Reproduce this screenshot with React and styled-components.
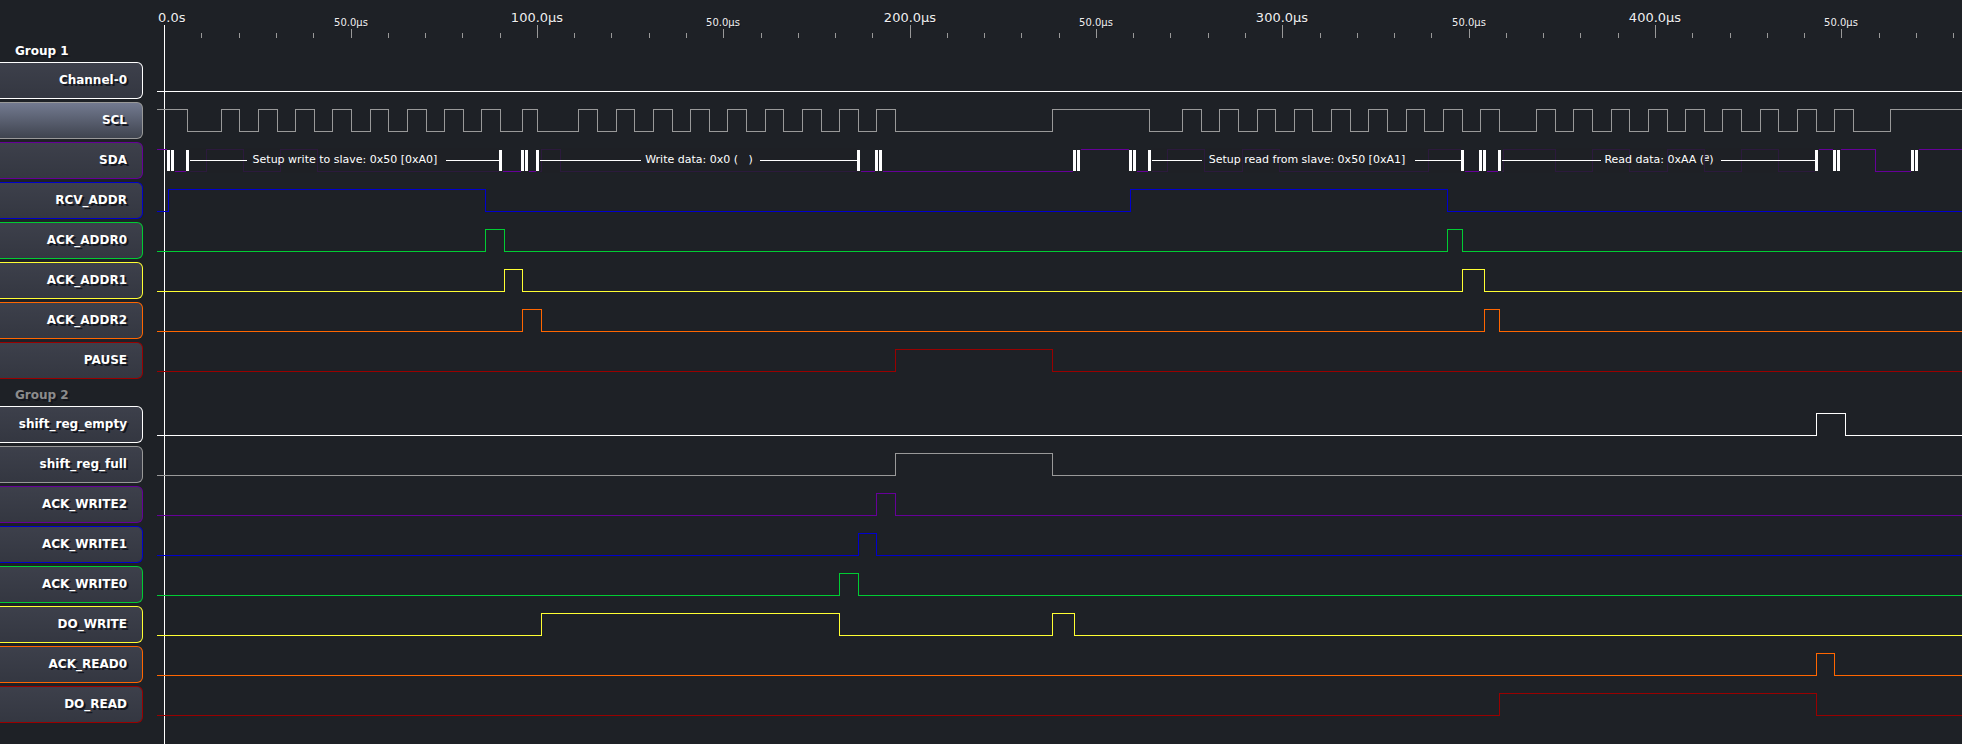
import React from 'react';
import styled, { createGlobalStyle } from 'styled-components';

const Global = createGlobalStyle`
  *, *::before, *::after { box-sizing: border-box; }
  body {
    margin: 0;
    background: #1e2126;
    color: #ffffff;
    font-family: 'DejaVu Sans', sans-serif;
  }
`;

/* Horizontal scale of the capture: the trigger sits at ORIGIN, traces start at PLOT_LEFT. */
const PLOT_LEFT = 157;
const ORIGIN = 164.7;
const PX_PER_US = 3.727;
const TRACE_END = 4000;
const HIGH = 7;
const LOW = 29;

const colors = {
  white: '#ffffff',
  gray: '#999999',
  purple: '#660099',
  blue: '#0000cc',
  green: '#00cc33',
  yellow: '#ffff33',
  orange: '#ff6600',
  red: '#990000',
};

const sdaEvents = {
  markers: [
    167, 171, 186, 499, 521, 525, 536, 857, 875, 879, 1073, 1077, 1129, 1133,
    1148, 1461, 1479, 1483, 1498, 1815, 1833, 1837, 1911, 1915,
  ],
  spans: [
    { from: 189, to: 499, gap: [247, 446], label: 'Setup write to slave: 0x50 [0xA0]' },
    { from: 539, to: 857, gap: [641, 760], label: 'Write data: 0x0 (\u00a0\u00a0\u00a0)' },
    { from: 1151, to: 1461, gap: [1202, 1415], label: 'Setup read from slave: 0x50 [0xA1]' },
    { from: 1501, to: 1815, gap: [1601, 1721], label: 'Read data: 0xAA (ª)' },
  ],
};

const groups = [
  {
    name: 'Group 1',
    channels: [
      { name: 'Channel-0', color: colors.white, edges: [] },
      {
        name: 'SCL',
        color: colors.gray,
        selected: true,
        startHigh: true,
        edges: [
          187, 221, 239, 258, 277, 295, 314, 332, 351, 370, 388, 407, 426, 444,
          463, 481, 500, 522, 537, 578, 597, 616, 634, 653, 672, 690, 709, 727,
          746, 765, 783, 802, 821, 839, 858, 876, 895, 1052, 1149, 1182, 1201,
          1219, 1238, 1257, 1275, 1294, 1312, 1331, 1350, 1368, 1387, 1406,
          1424, 1443, 1462, 1480, 1499, 1536, 1555, 1573, 1592, 1611, 1629,
          1648, 1667, 1685, 1704, 1722, 1741, 1760, 1778, 1797, 1816, 1834,
          1853, 1890,
        ],
      },
      {
        name: 'SDA',
        color: colors.purple,
        startHigh: true,
        edges: [
          168, 206, 243, 280, 317, 541, 560, 1075, 1131, 1167, 1204, 1242,
          1279, 1428, 1462, 1503, 1555, 1592, 1629, 1667, 1704, 1741, 1778,
          1816, 1875, 1912,
        ],
        events: sdaEvents,
      },
      { name: 'RCV_ADDR', color: colors.blue, edges: [168, 485, 1130, 1447] },
      { name: 'ACK_ADDR0', color: colors.green, edges: [485, 504, 1447, 1462] },
      { name: 'ACK_ADDR1', color: colors.yellow, edges: [504, 522, 1462, 1484] },
      { name: 'ACK_ADDR2', color: colors.orange, edges: [522, 541, 1484, 1499] },
      { name: 'PAUSE', color: colors.red, edges: [895, 1052] },
    ],
  },
  {
    name: 'Group 2',
    muted: true,
    channels: [
      { name: 'shift_reg_empty', color: colors.white, edges: [1816, 1845] },
      { name: 'shift_reg_full', color: colors.gray, edges: [895, 1052] },
      { name: 'ACK_WRITE2', color: colors.purple, edges: [876, 895] },
      { name: 'ACK_WRITE1', color: colors.blue, edges: [858, 876] },
      { name: 'ACK_WRITE0', color: colors.green, edges: [839, 858] },
      { name: 'DO_WRITE', color: colors.yellow, edges: [541, 839, 1052, 1074] },
      { name: 'ACK_READ0', color: colors.orange, edges: [1816, 1834] },
      { name: 'DO_READ', color: colors.red, edges: [1499, 1816] },
    ],
  },
];

const Page = styled.main`
  position: relative;
  min-height: 100vh;
  overflow: hidden;
`;

const Header = styled.header`
  position: relative;
  z-index: 1;
  padding-left: ${PLOT_LEFT}px;
`;

const Cursor = styled.div`
  position: absolute;
  top: 25px;
  bottom: 0;
  left: 164px;
  width: 1px;
  background: #ffffff;
`;

const Group = styled.section`
  position: relative;
  display: flex;
  flex-direction: column;
  gap: 3px;
  padding-bottom: 3px;
`;

const GroupName = styled.h2`
  margin: 0;
  padding-left: 15px;
  height: 21px;
  font-size: 12px;
  line-height: 26px;
  font-weight: bold;
  color: ${(p) => (p.$muted ? '#8c8c8c' : '#ffffff')};
  text-shadow: 2px 2px 0 #14161e;
`;

const Channel = styled.div`
  display: flex;
  gap: 14px;
`;

const ChannelButton = styled.button`
  flex: none;
  width: 143px;
  height: 37px;
  padding: 0 15px 2px 0;
  border: 1px solid ${(p) => p.$color};
  border-left: 0;
  border-radius: 0 6px 6px 0;
  background: ${(p) =>
    p.$selected
      ? 'linear-gradient(#737a90, #3f444f)'
      : 'linear-gradient(#3d404b, #343741)'};
  color: #ffffff;
  font: bold 12px 'DejaVu Sans', sans-serif;
  text-align: right;
  text-shadow: 2px 2px 0 #14161e;
`;

const Plot = styled.svg`
  display: block;
  flex: 1;
  min-width: 0;
  width: 100%;
  height: ${(p) => p.$height}px;
  overflow: hidden;
  shape-rendering: crispEdges;
`;

const Scale = styled.text`
  font-size: ${(p) => (p.$major ? 13 : 10)}px;
  fill: #eeeeee;
  text-anchor: ${(p) => (p.$start ? 'start' : 'middle')};
  text-shadow: 1px 1px 0 #14161e;
`;

const EventText = styled.text`
  font-size: 11px;
  fill: #ffffff;
  text-anchor: middle;
`;

function Ruler() {
  const ticks = Array.from({ length: 49 }, (_, n) => n);
  return (
    <Plot $height={38} role="img" aria-label="Time scale">
      {ticks.map((n) => {
        const x = Math.floor(ORIGIN + n * 10 * PX_PER_US) - PLOT_LEFT;
        const major = n % 10 === 0;
        const middle = n % 5 === 0;
        const top = major ? 25 : middle ? 29 : 33;
        return (
          <g key={n}>
            {n > 0 && <rect x={x} y={top} width="1" height={38 - top} fill="#999999" />}
            {major && n === 0 && <Scale $major $start x="1" y="22">0.0s</Scale>}
            {major && n > 0 && <Scale $major x={x} y="22">{`${n * 10}.0µs`}</Scale>}
            {!major && middle && <Scale x={x} y="26">50.0µs</Scale>}
          </g>
        );
      })}
    </Plot>
  );
}

function tracePath(edges, startHigh) {
  let high = Boolean(startHigh);
  let d = `M0 ${(high ? HIGH : LOW) + 0.5}`;
  edges.forEach((edge) => {
    high = !high;
    d += `H${edge - PLOT_LEFT + 0.5}V${(high ? HIGH : LOW) + 0.5}`;
  });
  return `${d}H${TRACE_END}`;
}

function Events({ markers, spans }) {
  return (
    <g>
      {spans.map(({ from, to, gap, label }) => (
        <g key={label}>
          <rect x={from - PLOT_LEFT} y="6" width={to - from} height="25" fill="#1e2126" opacity="0.8" />
          <path
            d={`M${from - PLOT_LEFT} 18.5H${gap[0] - PLOT_LEFT}M${gap[1] - PLOT_LEFT} 18.5H${to - PLOT_LEFT}`}
            stroke="#ffffff"
          />
          <EventText x={Math.round((gap[0] + gap[1]) / 2) - 2 - PLOT_LEFT} y="21">{label}</EventText>
        </g>
      ))}
      {markers.map((x) => (
        <g key={x}>
          <rect x={x - PLOT_LEFT} y="6" width="4" height="25" fill="#1e2126" />
          <rect x={x - PLOT_LEFT} y="8" width="3" height="21" fill="#ffffff" />
        </g>
      ))}
    </g>
  );
}

export default function App() {
  return (
    <Page>
      <Global />
      <Cursor />
      <Header>
        <Ruler />
      </Header>
      {groups.map((group) => (
        <Group key={group.name}>
          <GroupName $muted={group.muted}>{group.name}</GroupName>
          {group.channels.map((ch) => (
            <Channel key={ch.name}>
              <ChannelButton type="button" $color={ch.color} $selected={ch.selected} aria-pressed={Boolean(ch.selected)}>
                {ch.name}
              </ChannelButton>
              <Plot $height={37} role="img" aria-label={`${ch.name} trace`}>
                <path d={tracePath(ch.edges, ch.startHigh)} fill="none" stroke={ch.color} />
                {ch.events && <Events {...ch.events} />}
              </Plot>
            </Channel>
          ))}
        </Group>
      ))}
    </Page>
  );
}
